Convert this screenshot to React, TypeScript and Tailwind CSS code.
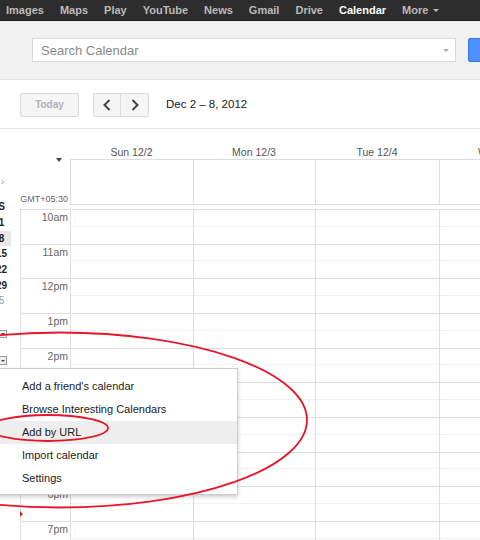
import React from "react";

const NAV = ["Images", "Maps", "Play", "YouTube", "News", "Gmail", "Drive"];
const HOURS = ["10am", "11am", "12pm", "1pm", "2pm", "3pm", "4pm", "5pm", "6pm", "7pm", "8pm"];
const DAYS = [
  { label: "Sun 12/2", w: "w-[123px]" },
  { label: "Mon 12/3", w: "w-[122px]" },
  { label: "Tue 12/4", w: "w-[124px]" },
  { label: "Wed 12/5", w: "w-[123px]" },
];
const MENU = [
  "Add a friend's calendar",
  "Browse Interesting Calendars",
  "Add by URL",
  "Import calendar",
  "Settings",
];
const MINI = [
  { t: "1", cls: "font-bold text-[#222]" },
  { t: "8", cls: "font-bold text-[#222] bg-[#e8e8e8]" },
  { t: "15", cls: "font-bold text-[#222]" },
  { t: "22", cls: "font-bold text-[#222]" },
  { t: "29", cls: "font-bold text-[#222]" },
  { t: "5", cls: "text-[#999]" },
];

function Chevron({ dir }: { dir: "left" | "right" }) {
  return (
    <svg width="8" height="12" viewBox="0 0 8 12">
      <polyline
        points={dir === "left" ? "6.5,1 1.5,6 6.5,11" : "1.5,1 6.5,6 1.5,11"}
        fill="none"
        stroke="#444"
        strokeWidth="2"
      />
    </svg>
  );
}

function TopBar() {
  return (
    <div className="h-[21px] bg-[#2d2d2d] border-b border-[#1a1a1a] flex items-center pl-[6px] gap-[16px] text-[11px] font-bold text-[#bbb] whitespace-nowrap">
      {NAV.map((n) => (
        <span key={n}>{n}</span>
      ))}
      <span className="text-white">Calendar</span>
      <span className="flex items-center gap-[5px]">
        More
        <span className="w-0 h-0 border-x-[3px] border-x-transparent border-t-[3px] border-t-[#bbb]" />
      </span>
    </div>
  );
}

function SearchHeader() {
  return (
    <div className="h-[59px] bg-[#f1f1f1] border-b border-[#e5e5e5] flex items-center">
      <div className="ml-[32px] w-[424px] h-[24px] shrink-0 bg-white border border-[#d9d9d9] flex items-center pl-[8px] pr-[6px]">
        <span className="flex-1 pt-[1px] text-[13px] text-[#888]">Search Calendar</span>
        <span className="w-0 h-0 border-x-[3px] border-x-transparent border-t-[3px] border-t-[#aaa]" />
      </div>
      <div className="ml-[12px] w-[70px] h-[24px] shrink-0 bg-[#4d90fe] border border-[#3079ed] rounded-[2px]" />
    </div>
  );
}

function Toolbar() {
  return (
    <div className="h-[49px] border-b border-[#e5e5e5] flex items-center">
      <div className="ml-[20px] mt-[1px] w-[59px] h-[24px] bg-[#f5f5f5] border border-[#dcdcdc] rounded-[2px] flex items-center justify-center text-[10px] font-bold text-[#b0b0b0]">
        Today
      </div>
      <div className="ml-[14px] mt-[1px] h-[24px] flex bg-[#f5f5f5] border border-[#dcdcdc] rounded-[2px]">
        <div className="w-[27px] flex items-center justify-center border-r border-[#dcdcdc]">
          <Chevron dir="left" />
        </div>
        <div className="w-[27px] flex items-center justify-center">
          <Chevron dir="right" />
        </div>
      </div>
      <span className="ml-[17px] mt-[2px] text-[11.5px] text-[#222]">Dec 2 – 8, 2012</span>
    </div>
  );
}

function Sidebar() {
  return (
    <div className="w-[20px] shrink-0 overflow-hidden flex flex-col items-end">
      <div className="w-full mt-[47px] h-[12px] text-[10px] leading-[12px] text-[#999] pl-[1px]">›</div>
      <div className="mr-[9px] mt-[11px] w-[19px] h-[16px] text-center text-[10px] leading-[16px] font-bold text-[#222]">
        S
      </div>
      {MINI.map((m) => (
        <div key={m.t} className={`mr-[9px] w-[19px] h-[15.7px] text-center text-[10px] leading-[15.7px] ${m.cls}`}>
          {m.t}
        </div>
      ))}
      <div className="mr-[13px] mt-[21px] w-[14px] h-[8px] bg-[#eee] border border-[#999] flex items-center justify-end pr-[1px]">
        <span className="w-0 h-0 border-x-[2px] border-x-transparent border-t-[2px] border-t-[#444]" />
      </div>
      <div className="mr-[13px] mt-[18px] w-[14px] h-[9px] bg-[#eee] border border-[#999] flex items-center justify-end pr-[1px]">
        <span className="w-0 h-0 border-x-[2px] border-x-transparent border-t-[2px] border-t-[#444]" />
      </div>
    </div>
  );
}

function Calendar() {
  return (
    <div className="flex-1 flex flex-col min-w-0">
      <div className="h-[30px] flex items-end pb-[1px] whitespace-nowrap">
        <div className="w-[50px] shrink-0" />
        {DAYS.map((d) => (
          <div key={d.label} className={`${d.w} shrink-0 text-center text-[10.5px] leading-[12px] text-[#555]`}>
            {d.label}
          </div>
        ))}
      </div>
      <div className="h-[46px] flex">
        <div className="w-[50px] shrink-0 flex flex-col items-end pr-[2px]">
          <span className="mt-[-1px] mr-[6px] w-0 h-0 border-x-[3px] border-x-transparent border-t-[4px] border-t-[#444]" />
          <span className="mt-auto mb-[0px] text-[9px] leading-[11px] text-[#666] whitespace-nowrap">GMT+05:30</span>
        </div>
        {DAYS.map((d) => (
          <div key={d.label} className={`${d.w} shrink-0 border-t border-b border-l border-[#dedede]`} />
        ))}
      </div>
      <div className="mt-[4px] relative border-t border-[#dedede]">
        {HOURS.map((h) => (
          <div key={h} className="h-[34.67px] flex border-b border-[#dedede]">
            <div className="w-[50px] shrink-0 border-l border-[#dedede] text-right pr-[2px] pt-[1px] text-[10.5px] leading-[12px] text-[#666]">
              {h}
            </div>
            {DAYS.map((d) => (
              <div key={d.label} className={`${d.w} shrink-0 border-l border-[#dedede]`}>
                <div className="h-1/2 border-b border-dotted border-[#e6e6e6]" />
              </div>
            ))}
          </div>
        ))}
        <span className="absolute left-0 top-[301px] w-0 h-0 border-y-[3px] border-y-transparent border-l-[3px] border-l-[#dd2222]" />
      </div>
    </div>
  );
}

function AddMenu() {
  return (
    <div className="absolute left-[-10px] top-[368px] w-[248px] bg-white border border-[#ccc] shadow-[0_2px_4px_rgba(0,0,0,0.2)] pt-[6px] pb-[4px]">
      {MENU.map((m) => (
        <div
          key={m}
          className={`h-[23px] flex items-center pl-[31px] text-[11px] text-[#222] ${m === "Add by URL" ? "bg-[#eeeeee]" : ""}`}
        >
          {m}
        </div>
      ))}
    </div>
  );
}

export default function App() {
  return (
    <div className="relative w-[480px] h-[540px] overflow-hidden bg-white font-['Liberation_Sans',Arial,sans-serif]">
      <TopBar />
      <SearchHeader />
      <Toolbar />
      <div className="flex">
        <Sidebar />
        <Calendar />
      </div>
      <AddMenu />
      <svg className="absolute inset-0 pointer-events-none" width="480" height="540" viewBox="0 0 480 540">
        <ellipse cx="60" cy="420" rx="247" ry="87.5" fill="none" stroke="#e8162a" strokeWidth="1.8" />
        <ellipse cx="48" cy="428" rx="60" ry="13" fill="none" stroke="#e8162a" strokeWidth="1.8" />
      </svg>
    </div>
  );
}
